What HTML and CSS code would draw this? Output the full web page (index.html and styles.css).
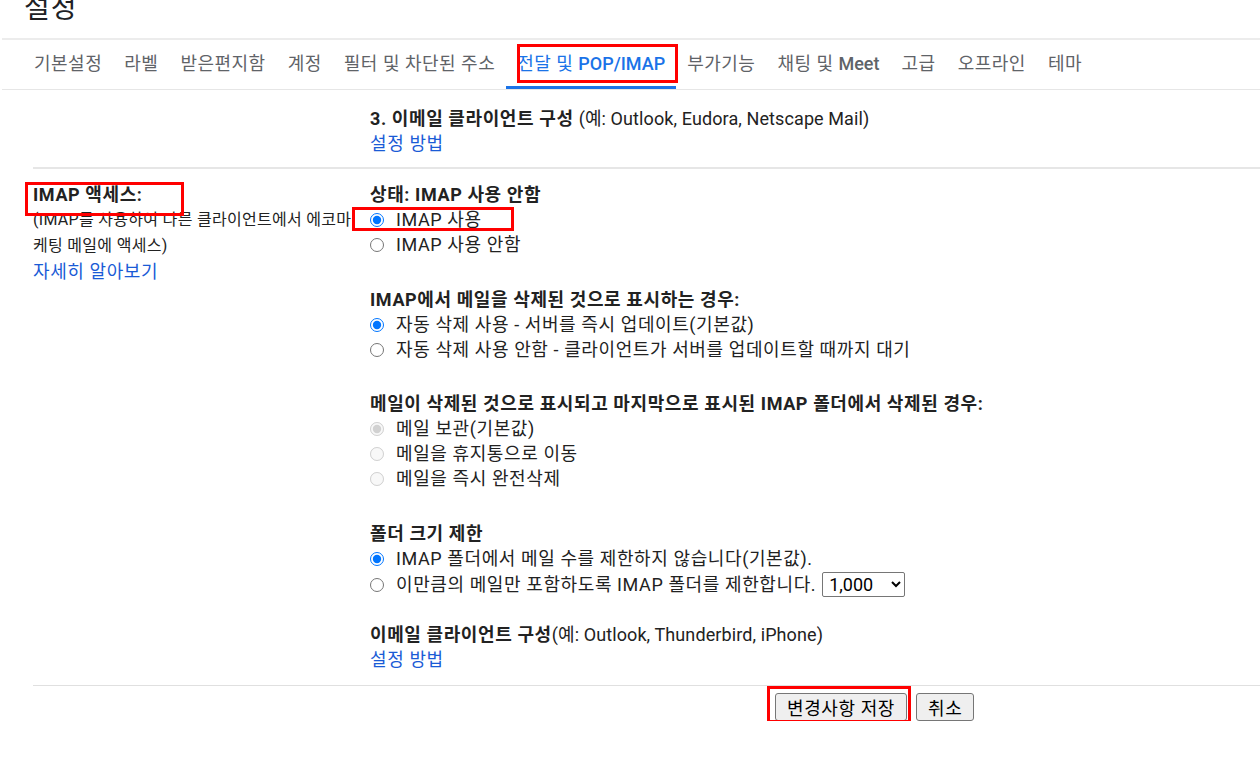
FILE: index.html
```html
<!DOCTYPE html>
<html lang="ko">
<head>
    <meta charset="utf-8">
    <title>설정 - 전달 및 POP/IMAP</title>
    <link rel="stylesheet" href="styles.css">
</head>
<body>
    <header class="page-head">
        <h1 class="page-title">설정</h1>
    </header>

    <nav class="tabs">
        <a class="tab" href="#">기본설정</a>
        <a class="tab" href="#">라벨</a>
        <a class="tab" href="#">받은편지함</a>
        <a class="tab" href="#">계정</a>
        <a class="tab" href="#">필터 및 차단된 주소</a>
        <a class="tab active" href="#">전달 및 <b>POP/IMAP</b></a>
        <a class="tab" href="#">부가기능</a>
        <a class="tab" href="#">채팅 및 <b>Meet</b></a>
        <a class="tab" href="#">고급</a>
        <a class="tab" href="#">오프라인</a>
        <a class="tab" href="#">테마</a>
    </nav>

    <div class="settings">
        <div class="setting-row setting-row-top">
            <div class="setting-label"></div>
            <div class="setting-value">
                <div class="line"><b>3. 이메일 클라이언트 구성</b> <span class="latin">(예: Outlook, Eudora, Netscape Mail)</span></div>
                <div class="line"><a class="link" href="#">설정 방법</a></div>
            </div>
        </div>

        <div class="setting-row">
            <div class="setting-label">
                <div class="line"><b>IMAP 액세스:</b></div>
                <div class="label-help">(IMAP를 사용하여 다른 클라이언트에서 에코마케팅 메일에 액세스)</div>
                <div class="line"><a class="link" href="#">자세히 알아보기</a></div>
            </div>
            <div class="setting-value">
                <div class="group">
                    <div class="line"><b>상태: IMAP 사용 안함</b></div>
                    <label class="option"><input type="radio" name="imap" checked>IMAP 사용</label>
                    <label class="option"><input type="radio" name="imap">IMAP 사용 안함</label>
                </div>

                <div class="group">
                    <div class="line"><b>IMAP에서 메일을 삭제된 것으로 표시하는 경우:</b></div>
                    <label class="option"><input type="radio" name="expunge" checked>자동 삭제 사용 - 서버를 즉시 업데이트(기본값)</label>
                    <label class="option"><input type="radio" name="expunge">자동 삭제 사용 안함 - 클라이언트가 서버를 업데이트할 때까지 대기</label>
                </div>

                <div class="group group-tight">
                    <div class="line"><b>메일이 삭제된 것으로 표시되고 마지막으로 표시된 IMAP 폴더에서 삭제된 경우:</b></div>
                    <label class="option"><input type="radio" name="deleted" checked disabled>메일 보관(기본값)</label>
                    <label class="option"><input type="radio" name="deleted" disabled>메일을 휴지통으로 이동</label>
                    <label class="option"><input type="radio" name="deleted" disabled>메일을 즉시 완전삭제</label>
                </div>

                <div class="group">
                    <div class="line"><b>폴더 크기 제한</b></div>
                    <label class="option"><input type="radio" name="limit" checked>IMAP 폴더에서 메일 수를 제한하지 않습니다(기본값).</label>
                    <label class="option option-select"><input type="radio" name="limit">이만큼의 메일만 포함하도록 IMAP 폴더를 제한합니다.
                        <select class="limit-select">
                            <option>1,000</option>
                            <option>2,000</option>
                            <option>5,000</option>
                            <option>10,000</option>
                        </select>
                    </label>
                </div>

                <div class="group group-last">
                    <div class="line"><b>이메일 클라이언트 구성</b><span class="latin">(예: Outlook, Thunderbird, iPhone)</span></div>
                    <div class="line"><a class="link" href="#">설정 방법</a></div>
                </div>
            </div>
        </div>

        <div class="actions">
            <button class="form-button">변경사항 저장</button>
            <button class="form-button">취소</button>
        </div>
    </div>

    <!-- annotation boxes drawn over the screenshot -->
    <div class="mark mark-tab"></div>
    <div class="mark mark-access"></div>
    <div class="mark mark-enable"></div>
    <div class="mark mark-save"></div>
</body>
</html>
```

FILE: styles.css
```css
body {
    margin: 0;
    position: relative;
    font-family: Roboto, "Noto Sans CJK KR", sans-serif;
    font-size: 18px;
    letter-spacing: 0.6px;
    line-height: 25px;
    color: #222;
    background: #fff;
}

.page-head {
    height: 38px;
    margin-left: 2px;
    padding-left: 22px;
    border-bottom: 2px solid #ececec;
    overflow: hidden;
}

.page-title {
    margin: -6px 0 0;
    font-size: 28px;
    font-weight: 400;
    letter-spacing: 1px;
    line-height: 30px;
    color: #202124;
}

.tabs {
    display: flex;
    height: 49px;
    margin-left: 2px;
    padding-left: 21px;
    border-bottom: 1px solid #e6e6e6;
}

.tab {
    display: flex;
    align-items: center;
    padding: 0 11px 2px;
    font-size: 18px;
    letter-spacing: 0.5px;
    color: #5f6368;
    text-decoration: none;
    white-space: pre;
}

.tab b {
    font-weight: 500;
    letter-spacing: 0;
}

.tab.active {
    color: #1a73e8;
    box-shadow: inset 0 -3px 0 #1a73e8;
}

.settings {
    padding: 3px 0 0 33px;
}

.setting-row {
    display: flex;
    padding: 13px 0;
    border-bottom: 1px solid #e0e0e0;
}

.setting-row-top {
    padding-bottom: 11px;
    border-bottom: 2px solid #e6e6e6;
}

.setting-label {
    flex-shrink: 0;
    width: 337px;
    padding-right: 8px;
    box-sizing: border-box;
}

.label-help {
    font-size: 16px;
    letter-spacing: 0.3px;
    line-height: 26px;
}

.setting-value {
    flex: 1;
}

.line {
    height: 25px;
    white-space: nowrap;
}

.latin {
    letter-spacing: 0.1px;
}

.link {
    color: #1a5bd6;
    text-decoration: none;
}

.group + .group {
    margin-top: 30px;
}

.group-tight {
    margin-top: 29px !important;
}

.group-last {
    margin-top: 24px !important;
}

.option {
    display: flex;
    align-items: center;
    height: 25px;
    white-space: nowrap;
}

.option input[type="radio"] {
    width: 14px;
    height: 14px;
    margin: 0 12px 0 0;
}

.option-select {
    height: 27px;
}

.limit-select {
    width: 83px;
    height: 25px;
    margin-left: 6px;
    padding: 0 2px;
    font-family: Roboto, sans-serif;
    font-size: 18px;
    letter-spacing: 0;
    color: #000;
    background: #fff;
    border: 1px solid #767676;
    border-radius: 2px;
}

.actions {
    display: flex;
    gap: 9px;
    padding: 7px 0 0 742px;
}

.form-button {
    height: 28px;
    padding: 0 11px;
    font-family: Roboto, "Noto Sans CJK KR", sans-serif;
    font-size: 18px;
    letter-spacing: 0.6px;
    color: #000;
    background: #efefef;
    border: 1px solid #767676;
    border-radius: 3px;
}

.mark {
    position: absolute;
    box-sizing: border-box;
    border: 3px solid #ff0000;
}

.mark-tab {
    left: 517px;
    top: 44px;
    width: 161px;
    height: 39px;
}

.mark-access {
    left: 25px;
    top: 182px;
    width: 159px;
    height: 34px;
}

.mark-enable {
    left: 352px;
    top: 207px;
    width: 162px;
    height: 24px;
}

.mark-save {
    left: 767px;
    top: 686px;
    width: 144px;
    height: 37px;
}
```
